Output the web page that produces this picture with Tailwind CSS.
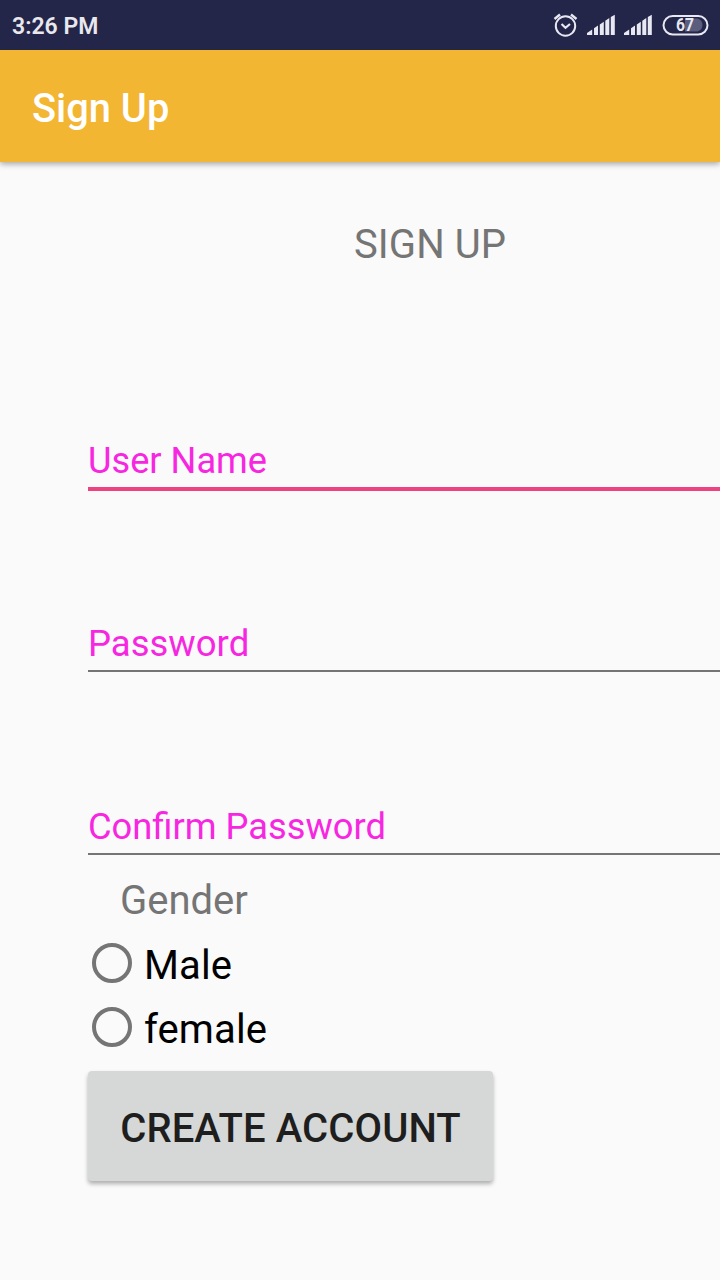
<!DOCTYPE html>
<html lang="en">
<head>
<meta charset="utf-8">
<title>Sign Up</title>
<script src="https://cdn.jsdelivr.net/npm/@tailwindcss/browser@4"></script>
</head>
<body class="w-[720px] h-[1280px] overflow-hidden bg-[#fafafa] font-['Roboto',sans-serif] flex flex-col">
<div class="relative z-10 h-[50px] shrink-0 bg-[#232549] flex items-center justify-between pl-3 text-[#e8e8ed]">
  <span class="text-[23px] leading-[50px] font-semibold pt-[3px]">3:26 PM</span>
  <svg class="w-[180px] h-[50px]" viewBox="540 0 180 50" fill="none" stroke="#e8e8f2" stroke-width="2">
    <circle cx="565.5" cy="26" r="9.700"/>
    <path d="M554.500 19L560 14.500M571 14.500L576.500 19" stroke-width="2.400"/>
    <path d="M561.500 24L565.500 27.800L570 24" stroke-width="2.200"/>
    <g stroke="none" fill="#e8e8f2">
      <path id="sig" d="M587 35V33L592.200 29.500V35ZM594 35V28.300L598 25.500V35ZM599.800 35V24.500L603.800 21.700V35ZM605.300 35V20.800L609.300 18V35ZM610.800 35V17L614.800 14.700V35Z"/>
      <use href="#sig" x="37"/>
    </g>
    <path d="M685 18.500H697.500A6.750 6.750 0 0 1 697.500 31.500H685Z" fill="#5b5d7d" stroke="none"/>
    <rect x="663.500" y="16" width="44" height="18.500" rx="9.250"/>
    <text x="676" y="31.300" font-size="18.500" font-weight="700" textLength="18" lengthAdjust="spacingAndGlyphs" fill="#e8e8f2" stroke="none">67</text>
  </svg>
</div>
<header class="h-[112px] shrink-0 bg-[#f3b632] shadow-[0_2px_6px_rgba(0,0,0,0.35)] flex items-center px-8 text-white text-[39.8px] font-medium pt-1.5">Sign Up</header>
<main class="flex flex-col text-[40px] leading-[47px]">
  <h1 class="pl-[354px] mt-[59px] text-[#757575] tracking-[0.1px]">SIGN UP</h1>
  <div class="ml-[88px] mt-[172px] h-[51px] border-b-4 border-[#ec4380] text-[36.2px] leading-[42px] text-[#f727e1]">User Name</div>
  <div class="ml-[88px] mt-[132px] h-[49px] border-b-2 border-[#757575] text-[36.5px] leading-[42px] text-[#f727e1]">Password</div>
  <div class="ml-[88px] mt-[134px] h-[49px] border-b-2 border-[#757575] text-[36.3px] leading-[42px] text-[#f727e1]">Confirm Password</div>
  <div class="ml-[120px] mt-[22px] text-[#757575]">Gender</div>
  <label class="ml-[92px] mt-[7px] h-16 flex items-center gap-3 text-black"><span class="size-10 rounded-full border-4 border-[#757575]"></span><span class="pt-1 tracking-[0.1px]">Male</span></label>
  <label class="ml-[92px] h-16 flex items-center gap-3 text-black"><span class="size-10 rounded-full border-4 border-[#757575]"></span><span class="pt-1 tracking-[0.1px]">female</span></label>
  <button class="ml-[88px] mt-3 w-[405px] h-[110px] pt-1 rounded-[4px] bg-[#d6d8d7] text-[#1e1e1e] font-medium tracking-[0.1px] shadow-[0_3px_4px_rgba(0,0,0,0.3)]">CREATE ACCOUNT</button>
</main>
</body>
</html>
